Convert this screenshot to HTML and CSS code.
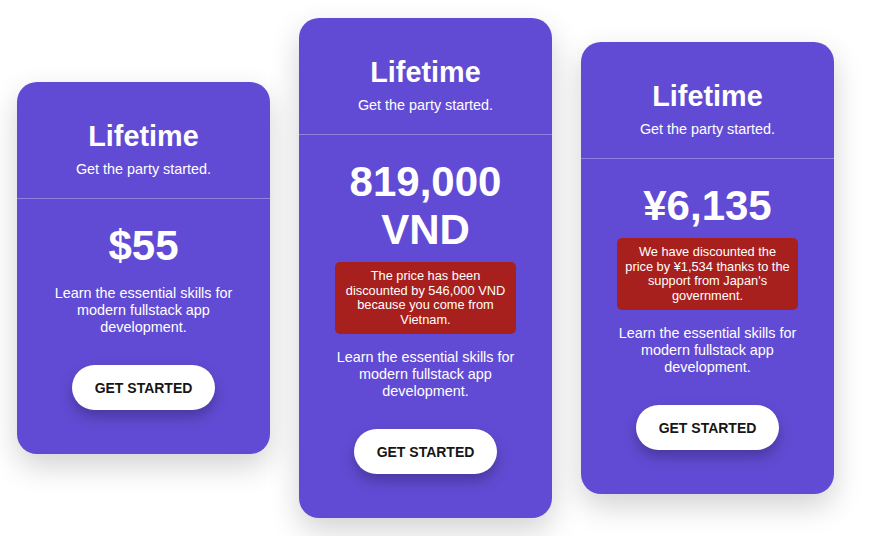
FILE: index.html
```html
<!DOCTYPE html>
<html lang="en">
  <head>
    <meta charset="UTF-8" />
    <meta name="viewport" content="width=device-width, initial-scale=1.0" />
    <title>Pricing</title>
    <link rel="stylesheet" href="styles.css">
  </head>
  <body>
    <!-- Pricing cards -->
    <div class="pricing">
      <div class="card">
        <div class="card-head">
          <h2>Lifetime</h2>
          <p class="tagline">Get the party started.</p>
        </div>
        <div class="card-body">
          <div class="price">$55</div>
          <p class="desc">Learn the essential skills for modern fullstack app development.</p>
          <button class="cta">GET STARTED</button>
        </div>
      </div>

      <div class="card">
        <div class="card-head">
          <h2>Lifetime</h2>
          <p class="tagline">Get the party started.</p>
        </div>
        <div class="card-body">
          <div class="price">819,000 VND</div>
          <div class="discount">The price has been discounted by 546,000 VND because you come from Vietnam.</div>
          <p class="desc">Learn the essential skills for modern fullstack app development.</p>
          <button class="cta">GET STARTED</button>
        </div>
      </div>

      <div class="card">
        <div class="card-head">
          <h2>Lifetime</h2>
          <p class="tagline">Get the party started.</p>
        </div>
        <div class="card-body">
          <div class="price">¥6,135</div>
          <div class="discount">We have discounted the price by ¥1,534 thanks to the support from Japan's government.</div>
          <p class="desc">Learn the essential skills for modern fullstack app development.</p>
          <button class="cta">GET STARTED</button>
        </div>
      </div>
    </div>
  </body>
</html>
```

FILE: styles.css
```css
html {
  height: 100%;
}

body {
  margin: 0;
  font-family: "Liberation Sans", Arial, sans-serif;
  background-color: #fff;
  color: #fff;
}

.pricing {
  display: flex;
  align-items: center;
  gap: 29px;
  padding: 18px 17px;
}

.card {
  width: 253px;
  flex-shrink: 0;
  background-color: #624bd4;
  border-radius: 20px;
  box-shadow: 0 12px 30px rgba(0, 0, 0, 0.18);
  text-align: center;
  overflow: hidden;
}

.card-head {
  padding: 38px 20px 21px;
  border-bottom: 1px solid rgba(255, 255, 255, 0.3);
}

.card-head h2 {
  margin: 0 0 8px;
  font-size: 28.8px;
  font-weight: 700;
}

.tagline {
  margin: 0;
  font-size: 14.4px;
}

.card-body {
  padding: 23px 36px 44px;
}

.price {
  font-size: 42px;
  font-weight: 700;
}

.discount {
  margin-top: 8px;
  padding: 7px 8px;
  background-color: #a8201e;
  border-radius: 5px;
  font-size: 12.8px;
  line-height: 14.5px;
}

.desc {
  margin: 15px 0 0;
  font-size: 14.4px;
  line-height: 17px;
}

.cta {
  margin-top: 29px;
  padding: 14px 23px;
  height: 45px;
  background-color: #fff;
  color: #161616;
  border: none;
  border-radius: 999px;
  font-family: inherit;
  font-size: 14px;
  font-weight: 700;
  cursor: pointer;
  box-shadow: 0 7px 14px rgba(0, 0, 0, 0.25);
}
```
